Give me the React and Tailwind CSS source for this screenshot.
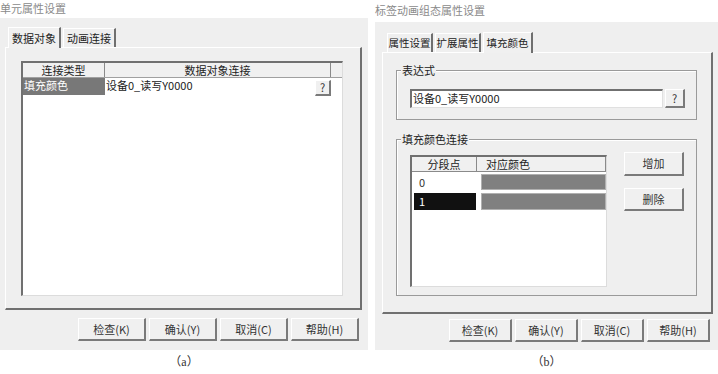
import React from "react";

const font = { fontFamily: '"Noto Sans CJK SC", "Noto Sans", sans-serif' };

// classic raised 3D button
const Btn = ({ children, className = "" }) => (
    <div
        className={`flex items-center justify-center whitespace-nowrap bg-[#f0f0f0] border-t border-l border-t-white border-l-white border-r-2 border-b-2 border-r-[#7a7a7a] border-b-[#7a7a7a] text-[11px] text-[#333] ${className}`}
    >
        {children}
    </div>
);

const Tab = ({ label, active, className = "" }) => (
    <div
        className={`flex items-center justify-center whitespace-nowrap border-t border-l border-t-white border-l-white border-r-2 border-r-[#6f6f6f] text-[#222] ${
            active ? "h-[21px] bg-[#f0f0f0] -mb-px relative z-10" : "h-[19px]"
        } ${className}`}
    >
        {label}
    </div>
);

const GroupBox = ({ legend, className = "", children }) => (
    <div className={`relative border border-[#9a9a9a] shadow-[inset_1px_1px_0_#fff] ${className}`}>
        <span className="absolute -top-[8px] left-[4px] bg-[#efefef] px-[1px] text-[11px] leading-[14px] text-[#222]">
            {legend}
        </span>
        {children}
    </div>
);

const BottomButtons = ({ w }) => (
    <div className="flex gap-[3px]">
        {["检查(K)", "确认(Y)", "取消(C)", "帮助(H)"].map((t) => (
            <Btn key={t} className={`${w} h-[23px]`}>
                {t}
            </Btn>
        ))}
    </div>
);

export default function App() {
    return (
        <div className="w-[718px] h-[374px] bg-white flex overflow-hidden" style={font}>
            {/* (a) */}
            <div className="w-[368px] flex flex-col">
                <div className="h-[18px] pt-[2px] text-[11px] leading-[13px] text-[#8a8a8a]">单元属性设置</div>
                <div className="h-[332px] bg-[#efefef] flex flex-col">
                    <div className="flex pt-[9px] pl-[8px] gap-[2px]">
                        <Tab label="数据对象" active className="w-[53px] text-[11px]" />
                        <Tab label="动画连接" className="w-[53px] mt-[1px] text-[11px]" />
                    </div>
                    <div className="ml-[5px] w-[357px] h-[263px] border-t border-l border-t-white border-l-white border-r-2 border-b-2 border-r-[#707070] border-b-[#707070] pl-[15px] pt-[13px]">
                        <div className="w-[322px] h-[235px] bg-white border-t-2 border-l-2 border-t-[#707070] border-l-[#707070] border-r border-b border-r-[#dcdcdc] border-b-[#dcdcdc]">
                            <div className="flex h-[15px] bg-[#f0f0f0] border-b border-[#a0a0a0] text-[11px] leading-[14px] text-[#222]">
                                <div className="w-[82px] text-center border-r border-[#8a8a8a]">连接类型</div>
                                <div className="w-[226px] text-center border-r border-[#8a8a8a]">数据对象连接</div>
                                <div className="flex-1" />
                            </div>
                            <div className="flex h-[17px] text-[11px] leading-[15px]">
                                <div className="w-[82px] bg-[#787878] text-white pl-[1px]">填充颜色</div>
                                <div className="w-[210px] pl-[1px] text-[#222]">设备0_读写Y0000</div>
                                <Btn className="w-[16px] h-[16px] mt-[2px] text-[10px]">?</Btn>
                            </div>
                        </div>
                    </div>
                    <div className="pl-[78px] pt-[8px]">
                        <BottomButtons w="w-[68px]" />
                    </div>
                </div>
                <div className="text-center text-[12px] pt-[3px] text-[#333]" style={{ fontFamily: '"Liberation Serif", "Noto Sans CJK SC", serif' }}>
                    （a）
                </div>
            </div>

            {/* (b) */}
            <div className="ml-[7px] w-[343px] flex flex-col">
                <div className="h-[22px] pt-[4px] text-[11px] leading-[13px] text-[#8a8a8a]">标签动画组态属性设置</div>
                <div className="h-[328px] bg-[#efefef] flex flex-col">
                    <div className="flex items-end pl-[12px] gap-[2px] h-[30px]">
                        <Tab label="属性设置" className="w-[46px] text-[10.5px]" />
                        <Tab label="扩展属性" className="w-[46px] text-[10.5px]" />
                        <Tab label="填充颜色" active className="w-[50px] text-[10.5px]" />
                    </div>
                    <div className="ml-[7px] w-[331px] h-[262px] border-t border-l border-t-white border-l-white border-r-2 border-b-2 border-r-[#707070] border-b-[#707070] pl-[13px] pt-[17px] flex flex-col gap-[19px]">
                        <GroupBox legend="表达式" className="w-[301px] h-[50px] pl-[13px] pt-[18px]">
                            <div className="flex gap-[2px]">
                                <div className="w-[253px] h-[19px] bg-white border-t-2 border-l-2 border-t-[#707070] border-l-[#707070] border-r border-b border-r-[#e0e0e0] border-b-[#e0e0e0] text-[11px] leading-[15px] pl-[1px] text-[#222]">
                                    设备0_读写Y0000
                                </div>
                                <Btn className="w-[20px] h-[19px] text-[10px]">?</Btn>
                            </div>
                        </GroupBox>
                        <GroupBox legend="填充颜色连接" className="w-[301px] h-[157px] pl-[13px] pt-[15px] flex gap-[17px]">
                            <div className="w-[197px] h-[132px] bg-white border-t-2 border-l-2 border-t-[#707070] border-l-[#707070] border-r border-b border-r-[#dcdcdc] border-b-[#dcdcdc]">
                                <div className="flex h-[15px] bg-[#f0f0f0] border-b border-[#8a8a8a] text-[11px] leading-[14px] text-[#222]">
                                    <div className="w-[65px] text-center border-r border-[#8a8a8a]">分段点</div>
                                    <div className="flex-1 pl-[9px] border-r border-[#8a8a8a]">对应颜色</div>
                                </div>
                                <div className="flex flex-col gap-[3px] pt-[2px] pl-[2px] text-[11px]">
                                    <div className="flex gap-[5px] h-[16px]">
                                        <div className="w-[62px] pl-[5px] leading-[16px] text-[#333]">0</div>
                                        <div className="w-[125px] bg-[#808080] border border-[#b0b0b0]" />
                                    </div>
                                    <div className="flex gap-[5px] h-[17px]">
                                        <div className="w-[62px] pl-[5px] leading-[17px] bg-[#111] text-white">1</div>
                                        <div className="w-[125px] bg-[#808080] border border-[#b0b0b0]" />
                                    </div>
                                </div>
                            </div>
                            <div className="flex flex-col gap-[12px] -mt-[3px]">
                                <Btn className="w-[60px] h-[24px]">增加</Btn>
                                <Btn className="w-[60px] h-[23px]">删除</Btn>
                            </div>
                        </GroupBox>
                    </div>
                    <div className="pl-[74px] pt-[5px]">
                        <BottomButtons w="w-[63px]" />
                    </div>
                </div>
                <div className="text-center text-[12px] pt-[3px] text-[#333]" style={{ fontFamily: '"Liberation Serif", "Noto Sans CJK SC", serif' }}>
                    （b）
                </div>
            </div>
        </div>
    );
}
